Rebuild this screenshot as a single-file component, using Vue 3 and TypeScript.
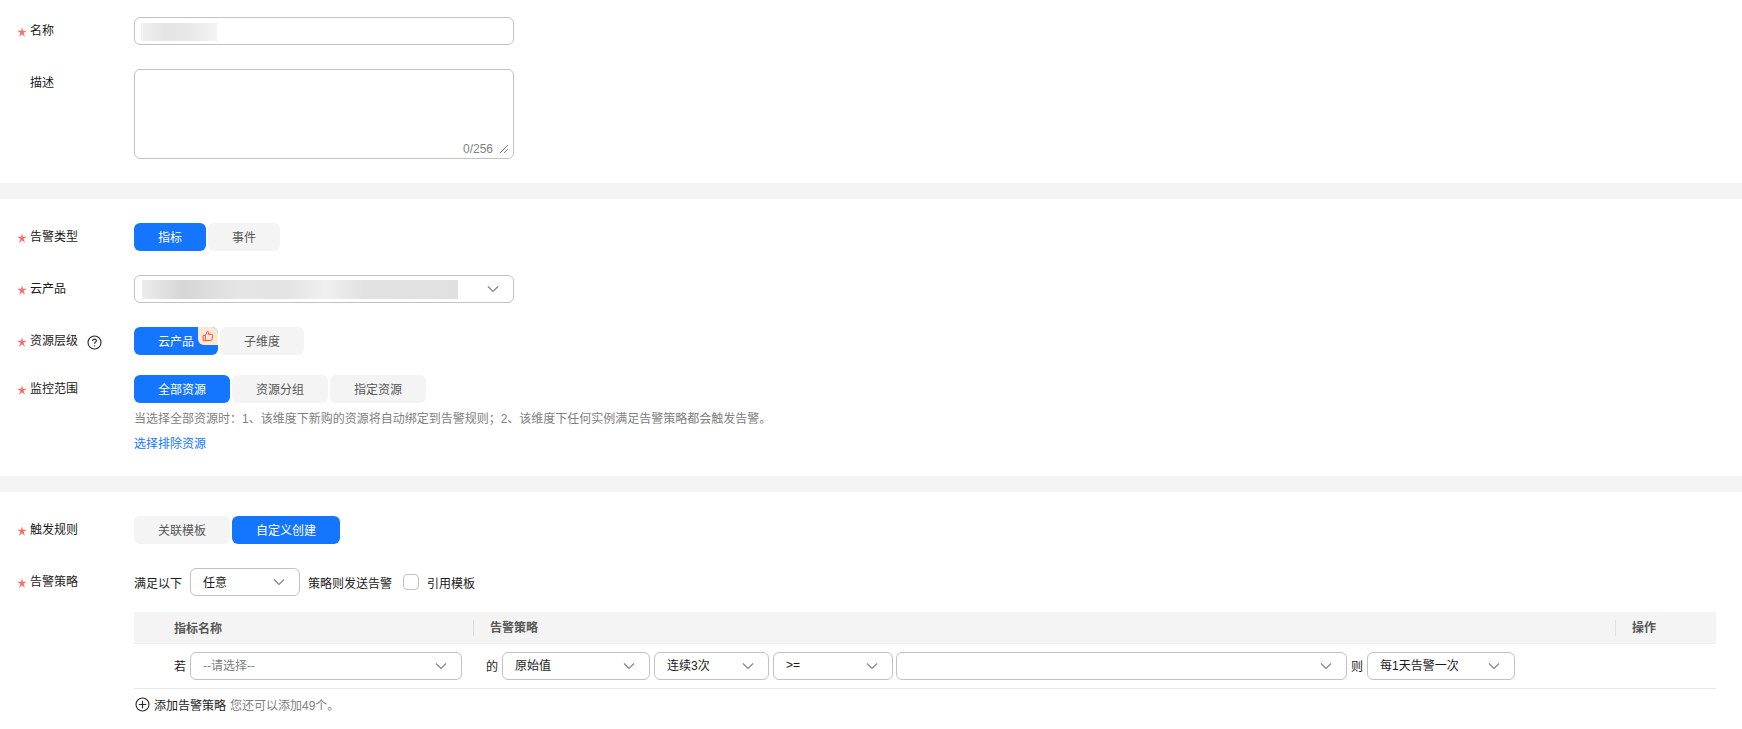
<script setup lang="ts">
const scopeTabs = [
  { text: '全部资源', active: true },
  { text: '资源分组', active: false },
  { text: '指定资源', active: false }
]
</script>

<template>
  <div class="page">
    <section class="section first">
      <div class="row">
        <label class="label required">名称</label>
        <div class="field input-wide">
          <div class="blur blur-name"></div>
        </div>
      </div>
      <div class="row">
        <label class="label">描述</label>
        <div class="field input-wide textarea">
          <span class="count">0/256</span>
          <svg class="resize" width="10" height="10" viewBox="0 0 10 10">
            <path d="M1 9 9 1M5 9 9 5" stroke="#808080" fill="none" />
          </svg>
        </div>
      </div>
    </section>

    <section class="section second">
      <div class="row">
        <label class="label required">告警类型</label>
        <div class="tabs">
          <button class="tab active w72">指标</button>
          <button class="tab w72">事件</button>
        </div>
      </div>
      <div class="row">
        <label class="label required">云产品</label>
        <div class="field input-wide select">
          <div class="blur blur-product"></div>
          <svg class="chev" width="12" height="8" viewBox="0 0 12 8"><path d="M1 1.5 6 6.5 11 1.5" /></svg>
        </div>
      </div>
      <div class="row tight">
        <label class="label required">
          资源层级
          <svg class="help" width="15" height="15" viewBox="0 0 15 15">
            <circle cx="7.5" cy="7.5" r="6.5" fill="none" stroke="#252525" stroke-width="1.1" />
            <path d="M5.6 5.9c0-1.1.9-1.8 1.9-1.8s1.9.7 1.9 1.7c0 1.4-1.9 1.5-1.9 3" fill="none" stroke="#252525" stroke-width="1.1" />
            <circle cx="7.5" cy="10.9" r=".7" fill="#252525" />
          </svg>
        </label>
        <div class="tabs">
          <button class="tab active product">
            云产品
            <span class="badge">
              <svg width="12" height="12" viewBox="0 0 12 12">
                <path d="M1.2 5.5h2.2v5.3H1.2zM3.4 5.5 5.4 1.3c.9 0 1.4.6 1.3 1.4l-.3 1.7h3.4c.6 0 1 .5.9 1.1l-.8 4.2c-.1.5-.5.8-1 .8H3.4" fill="none" stroke="#f0524f" stroke-width="1" stroke-linejoin="round" />
              </svg>
            </span>
          </button>
          <button class="tab w84">子维度</button>
        </div>
      </div>
      <div class="row scope">
        <label class="label required">监控范围</label>
        <div class="scope-body">
          <div class="tabs">
            <button v-for="t in scopeTabs" :key="t.text" class="tab w96" :class="{ active: t.active }">{{ t.text }}</button>
          </div>
          <p class="hint">当选择全部资源时：1、该维度下新购的资源将自动绑定到告警规则；2、该维度下任何实例满足告警策略都会触发告警。</p>
          <a class="link">选择排除资源</a>
        </div>
      </div>
    </section>

    <section class="section third">
      <div class="row">
        <label class="label required">触发规则</label>
        <div class="tabs">
          <button class="tab w96">关联模板</button>
          <button class="tab active w108">自定义创建</button>
        </div>
      </div>
      <div class="row strategy">
        <label class="label required">告警策略</label>
        <div class="strategy-body">
          <div class="strategy-head">
            <span>满足以下</span>
            <div class="field select any">
              <span class="value">任意</span>
              <svg class="chev" width="12" height="8" viewBox="0 0 12 8"><path d="M1 1.5 6 6.5 11 1.5" /></svg>
            </div>
            <span>策略则发送告警</span>
            <span class="check"></span>
            <span>引用模板</span>
          </div>
          <div class="table-head">
            <div class="th th-name">指标名称</div>
            <div class="th th-rule">告警策略</div>
            <div class="th th-op">操作</div>
          </div>
          <div class="table-row">
            <span class="word first-word">若</span>
            <div class="field select s-metric">
              <span class="value placeholder">--请选择--</span>
              <svg class="chev" width="12" height="8" viewBox="0 0 12 8"><path d="M1 1.5 6 6.5 11 1.5" /></svg>
            </div>
            <span class="word de">的</span>
            <div class="field select s-raw">
              <span class="value">原始值</span>
              <svg class="chev" width="12" height="8" viewBox="0 0 12 8"><path d="M1 1.5 6 6.5 11 1.5" /></svg>
            </div>
            <div class="field select s-times">
              <span class="value">连续3次</span>
              <svg class="chev" width="12" height="8" viewBox="0 0 12 8"><path d="M1 1.5 6 6.5 11 1.5" /></svg>
            </div>
            <div class="field select s-op">
              <span class="value">&gt;=</span>
              <svg class="chev" width="12" height="8" viewBox="0 0 12 8"><path d="M1 1.5 6 6.5 11 1.5" /></svg>
            </div>
            <div class="field select s-threshold">
              <svg class="chev" width="12" height="8" viewBox="0 0 12 8"><path d="M1 1.5 6 6.5 11 1.5" /></svg>
            </div>
            <span class="word ze">则</span>
            <div class="field select s-freq">
              <span class="value">每1天告警一次</span>
              <svg class="chev" width="12" height="8" viewBox="0 0 12 8"><path d="M1 1.5 6 6.5 11 1.5" /></svg>
            </div>
          </div>
          <div class="add">
            <svg width="15" height="15" viewBox="0 0 15 15">
              <circle cx="7.5" cy="7.5" r="6.5" fill="none" stroke="#252525" stroke-width="1.1" />
              <path d="M3.8 7.5h7.4M7.5 3.8v7.4" stroke="#252525" stroke-width="1.1" />
            </svg>
            <span class="add-text">添加告警策略</span>
            <span class="add-note">您还可以添加49个。</span>
          </div>
        </div>
      </div>
    </section>
  </div>
</template>

<style>
html,
body {
  margin: 0;
  background: #fff;
  overflow: hidden;
}
</style>

<style scoped>
.page {
  width: 1742px;
  height: 729px;
  background: #f4f4f4;
  font-family: "Liberation Sans", "Noto Sans CJK SC", sans-serif;
  font-size: 12px;
  color: #191919;
}

.section {
  background: #fff;
}

.first {
  padding: 17px 0 24px;
  margin-bottom: 16px;
}

.second {
  padding: 24px 0 24px;
  margin-bottom: 16px;
}

.third {
  padding: 24px 0 0;
  height: 213px;
}

.row {
  display: flex;
  margin-bottom: 24px;
}

.row:last-child {
  margin-bottom: 0;
}

.row.tight {
  margin-bottom: 20px;
}

.label {
  position: relative;
  flex: none;
  width: 134px;
  height: 28px;
  display: flex;
  align-items: center;
  box-sizing: border-box;
  padding-left: 30px;
  line-height: 28px;
}

.required::before {
  content: "";
  position: absolute;
  left: 17px;
  top: 10px;
  width: 10px;
  height: 10px;
  background: #f66f6a;
  clip-path: polygon(50% 0, 59% 38%, 100% 38%, 66% 58%, 80% 100%, 50% 72%, 20% 100%, 34% 58%, 0 38%, 41% 38%);
}

.help {
  margin-left: 9px;
  position: relative;
  top: 1px;
}

.field {
  position: relative;
  box-sizing: border-box;
  height: 28px;
  border: 1px solid #c2c2c2;
  border-radius: 6px;
  background: #fff;
  flex: none;
}

.input-wide {
  width: 380px;
}

.textarea {
  height: 90px;
}

.count {
  position: absolute;
  right: 20px;
  bottom: 1px;
  line-height: 16px;
  color: #808080;
}

.resize {
  position: absolute;
  right: 4px;
  bottom: 4px;
}

.blur {
  position: absolute;
  left: 6px;
  top: 5px;
}

.blur-name {
  width: 76px;
  height: 18px;
  background: linear-gradient(90deg, #f0f0f0, #e5e5e5 30%, #e7e7e7 60%, #f4f4f4);
}

.blur-product {
  left: 7px;
  top: 4px;
  width: 316px;
  height: 19px;
  background: linear-gradient(90deg, #ececec, #d6d6d6 13%, #e5e5e5 30%, #e3e3e3 45%, #f0f0f0 58%, #e2e2e2 70%, #e0e0e0 100%);
}

.select {
  display: flex;
  align-items: center;
}

.value {
  padding-left: 12px;
  position: relative;
  top: -1px;
}

.placeholder {
  color: #808080;
}

.chev {
  position: absolute;
  right: 14px;
  top: 9px;
}

.chev path {
  fill: none;
  stroke: #808080;
  stroke-width: 1.1;
}

.tabs {
  display: flex;
  gap: 2px;
}

.tab {
  position: relative;
  height: 28px;
  padding: 0 0 2px;
  border: 0;
  border-radius: 6px;
  background: #f4f4f4;
  color: #575757;
  font: inherit;
}

.tab.active {
  background: #1476ff;
  color: #fff;
}

.w72 {
  width: 72px;
}

.w84 {
  width: 84px;
}

.w96 {
  width: 96px;
}

.w108 {
  width: 108px;
}

.product {
  width: 84px;
  text-align: left;
  padding-left: 24px;
}

.badge {
  position: absolute;
  right: 0;
  top: 0;
  width: 20px;
  height: 18px;
  display: flex;
  align-items: center;
  justify-content: center;
  background: #ffe8d2;
  border-radius: 0 6px 0 6px;
}

.scope-body {
  flex: 1;
}

.hint {
  margin: 8px 0 0;
  line-height: 16px;
  color: #808080;
}

.link {
  display: block;
  margin-top: 9px;
  line-height: 16px;
  color: #1476ff;
}

.strategy-body {
  width: 1582px;
}

.strategy-head {
  display: flex;
  align-items: center;
  height: 28px;
  white-space: nowrap;
}

.any {
  width: 110px;
  margin: 0 8px;
}

.check {
  width: 16px;
  height: 16px;
  box-sizing: border-box;
  border: 1px solid #c2c2c2;
  border-radius: 4px;
  margin: 0 8px 0 11px;
}

.table-head {
  display: flex;
  align-items: center;
  height: 31px;
  margin-top: 16px;
  background: #f4f4f4;
  border-bottom: 1px solid #efefef;
  color: #575757;
  font-weight: 700;
}

.th {
  box-sizing: border-box;
}

.th-name {
  width: 339px;
  padding-left: 40px;
}

.th-rule {
  width: 1142px;
  padding-left: 16px;
  border-left: 1px solid #dfdfdf;
  line-height: 16px;
}

.th-op {
  width: 101px;
  padding-left: 16px;
  border-left: 1px solid #dfdfdf;
  line-height: 16px;
}

.table-row {
  display: flex;
  align-items: center;
  height: 45px;
  box-sizing: border-box;
  border-bottom: 1px solid #e8e8e8;
  padding: 0 0 1px 40px;
}

.word {
  flex: none;
  width: 12px;
}

.first-word {
  margin-right: 4px;
}

.de {
  margin: 0 4px 0 24px;
}

.ze {
  margin: 0 4px 0 4px;
}

.s-metric {
  width: 272px;
}

.s-raw {
  width: 148px;
  margin-right: 4px;
}

.s-times {
  width: 115px;
  margin-right: 4px;
}

.s-op {
  width: 120px;
  margin-right: 3px;
}

.s-threshold {
  width: 451px;
}

.s-freq {
  width: 148px;
}

.add {
  display: flex;
  align-items: center;
  height: 31px;
  padding-left: 1px;
}

.add-text {
  margin-left: 4px;
}

.add-note {
  margin-left: 4px;
  color: #808080;
}
</style>
